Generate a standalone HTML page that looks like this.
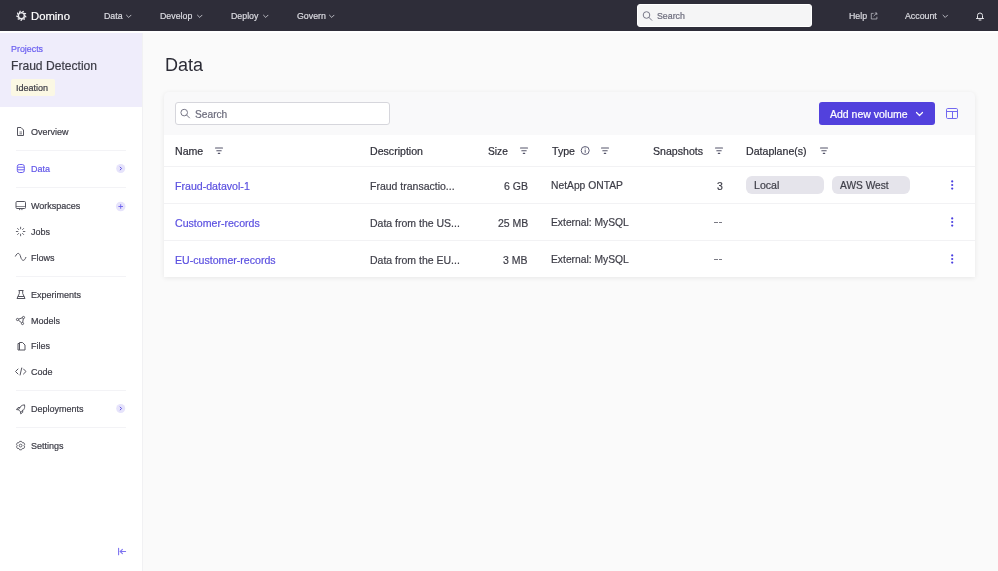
<!DOCTYPE html><html><head><meta charset="utf-8"><style>
*{box-sizing:border-box;margin:0;padding:0}
html,body{width:998px;height:571px;overflow:hidden;background:#fafafa;font-family:"Liberation Sans",sans-serif}
.t{position:absolute;line-height:1;white-space:nowrap;will-change:transform;-webkit-text-stroke:0.2px currentColor}
.b{position:absolute}
svg.ov{position:absolute;left:0;top:0}
</style></head><body><div class="b" style="left:0px;top:0px;width:998px;height:31px;background:#2e2d39"></div><div class="b" style="left:0px;top:31px;width:998px;height:2px;background:#ffffff"></div><div class="b" style="left:0px;top:33px;width:143px;height:538px;background:#fff;border-right:1px solid #f1f1f3"></div><div class="b" style="left:0px;top:33px;width:142px;height:74px;background:#efedfb"></div><div class="b" style="left:164px;top:92px;width:811px;height:185px;background:#f9f9fa;border-radius:5px 5px 0 0;box-shadow:0 1px 5px rgba(0,0,0,0.08)"></div><div class="b" style="left:164px;top:135px;width:811px;height:142px;background:#fff"></div><div class="b" style="left:164px;top:166px;width:811px;height:1px;background:#f2f2f4"></div><div class="b" style="left:164px;top:203px;width:811px;height:1px;background:#f2f2f4"></div><div class="b" style="left:164px;top:240px;width:811px;height:1px;background:#f2f2f4"></div><div class="b" style="left:175px;top:102px;width:215px;height:23px;background:#fff;border:1px solid #d6d6dc;border-radius:3px"></div><div class="b" style="left:637px;top:4px;width:175px;height:23px;background:#f5f5f6;border:1px solid #ffffff;border-radius:3px"></div><div class="b" style="left:819px;top:102px;width:116px;height:23px;background:#5241dd;border-radius:3px"></div><div class="b" style="left:746px;top:176px;width:78px;height:18px;background:#e5e4eb;border-radius:6px"></div><div class="b" style="left:832px;top:176px;width:78px;height:18px;background:#e5e4eb;border-radius:6px"></div><div class="b" style="left:11px;top:79px;width:44px;height:17px;background:#fbf8e4;border-radius:2px"></div><div class="b" style="left:16px;top:150px;width:110px;height:1px;background:#f3f3f6"></div><div class="b" style="left:16px;top:187px;width:110px;height:1px;background:#f3f3f6"></div><div class="b" style="left:16px;top:276px;width:110px;height:1px;background:#f3f3f6"></div><div class="b" style="left:16px;top:390px;width:110px;height:1px;background:#f3f3f6"></div><div class="b" style="left:16px;top:427px;width:110px;height:1px;background:#f3f3f6"></div><div class="b" style="left:714px;top:222.25px;width:3.8px;height:1.2px;background:#7a7a84"></div><div class="b" style="left:718.8px;top:222.25px;width:3.6px;height:1.2px;background:#7a7a84"></div><div class="b" style="left:714px;top:259.25px;width:3.8px;height:1.2px;background:#7a7a84"></div><div class="b" style="left:718.8px;top:259.25px;width:3.6px;height:1.2px;background:#7a7a84"></div><div class="t" style="left:31px;top:11px;font-size:11.3px;color:#ffffff;">Domino</div><div class="t" style="left:104px;top:12px;font-size:8.8px;color:#dcdce2;">Data</div><div class="t" style="left:160px;top:12px;font-size:8.8px;color:#dcdce2;">Develop</div><div class="t" style="left:231px;top:12px;font-size:8.8px;color:#dcdce2;">Deploy</div><div class="t" style="left:297px;top:12px;font-size:8.8px;color:#dcdce2;">Govern</div><div class="t" style="left:657px;top:12px;font-size:8.8px;color:#6c6c7c;">Search</div><div class="t" style="left:849px;top:12px;font-size:8.8px;color:#dcdce2;">Help</div><div class="t" style="left:905px;top:12px;font-size:8.8px;color:#dcdce2;">Account</div><div class="t" style="left:11px;top:45px;font-size:8.9px;color:#6b5ff0;">Projects</div><div class="t" style="left:11px;top:60px;font-size:12.1px;color:#3c3c46;">Fraud Detection</div><div class="t" style="left:16px;top:83.5px;font-size:9.0px;color:#3c3c46;">Ideation</div><div class="t" style="left:31px;top:128px;font-size:9.0px;color:#3c3c46;">Overview</div><div class="t" style="left:31px;top:164.5px;font-size:9.0px;color:#6257e8;">Data</div><div class="t" style="left:31px;top:202px;font-size:9.0px;color:#3c3c46;">Workspaces</div><div class="t" style="left:31px;top:228px;font-size:9.0px;color:#3c3c46;">Jobs</div><div class="t" style="left:31px;top:254px;font-size:9.0px;color:#3c3c46;">Flows</div><div class="t" style="left:31px;top:291px;font-size:9.0px;color:#3c3c46;">Experiments</div><div class="t" style="left:31px;top:316.5px;font-size:9.0px;color:#3c3c46;">Models</div><div class="t" style="left:31px;top:342px;font-size:9.0px;color:#3c3c46;">Files</div><div class="t" style="left:31px;top:368px;font-size:9.0px;color:#3c3c46;">Code</div><div class="t" style="left:31px;top:405px;font-size:9.0px;color:#3c3c46;">Deployments</div><div class="t" style="left:31px;top:442px;font-size:9.0px;color:#3c3c46;">Settings</div><div class="t" style="left:165px;top:56px;font-size:18px;color:#2c2c36;-webkit-text-stroke:0">Data</div><div class="t" style="left:195px;top:110px;font-size:10.2px;color:#6c6c7c;">Search</div><div class="t" style="left:830px;top:109px;font-size:10.5px;color:#ffffff;">Add new volume</div><div class="t" style="left:175px;top:146px;font-size:10.6px;color:#2e2e38;">Name</div><div class="t" style="left:370px;top:146px;font-size:10.6px;color:#2e2e38;">Description</div><div class="t" style="left:488px;top:146.6px;font-size:10.2px;color:#2e2e38;">Size</div><div class="t" style="left:552px;top:146px;font-size:10.6px;color:#2e2e38;">Type</div><div class="t" style="left:653px;top:146px;font-size:10.6px;color:#2e2e38;">Snapshots</div><div class="t" style="left:746px;top:146px;font-size:10.6px;color:#2e2e38;">Dataplane(s)</div><div class="t" style="left:175px;top:181px;font-size:10.6px;color:#5b50e0;">Fraud-datavol-1</div><div class="t" style="left:370px;top:181px;font-size:10.5px;color:#3e3e48;">Fraud transactio...</div><div class="t" style="right:470px;top:181px;font-size:10.5px;color:#3e3e48">6 GB</div><div class="t" style="left:551px;top:181px;font-size:10.3px;color:#3e3e48;">NetApp ONTAP</div><div class="t" style="right:275px;top:181px;font-size:10.5px;color:#3e3e48">3</div><div class="t" style="left:175px;top:218px;font-size:10.6px;color:#5b50e0;">Customer-records</div><div class="t" style="left:370px;top:218px;font-size:10.5px;color:#3e3e48;">Data from the US...</div><div class="t" style="right:470px;top:218px;font-size:10.5px;color:#3e3e48">25 MB</div><div class="t" style="left:551px;top:218px;font-size:10.3px;color:#3e3e48;">External: MySQL</div><div class="t" style="left:175px;top:255px;font-size:10.6px;color:#5b50e0;">EU-customer-records</div><div class="t" style="left:370px;top:255px;font-size:10.5px;color:#3e3e48;">Data from the EU...</div><div class="t" style="right:470px;top:255px;font-size:10.5px;color:#3e3e48">3 MB</div><div class="t" style="left:551px;top:255px;font-size:10.3px;color:#3e3e48;">External: MySQL</div><div class="t" style="left:754px;top:180px;font-size:10.6px;color:#3e3e48;">Local</div><div class="t" style="left:840px;top:181px;font-size:10.2px;color:#3e3e48;">AWS West</div><svg class="ov" width="998" height="571" viewBox="0 0 998 571"><g stroke="#55556a" stroke-width="1.1" stroke-linecap="round"><line x1="215.5" y1="148.0" x2="222.5" y2="148.0"/><line x1="216.8" y1="150.7" x2="221.2" y2="150.7"/><line x1="218.3" y1="153.4" x2="219.7" y2="153.4"/></g><g stroke="#55556a" stroke-width="1.1" stroke-linecap="round"><line x1="520.5" y1="148.0" x2="527.5" y2="148.0"/><line x1="521.8" y1="150.7" x2="526.2" y2="150.7"/><line x1="523.3" y1="153.4" x2="524.7" y2="153.4"/></g><g stroke="#55556a" stroke-width="1.1" stroke-linecap="round"><line x1="601.5" y1="148.0" x2="608.5" y2="148.0"/><line x1="602.8" y1="150.7" x2="607.2" y2="150.7"/><line x1="604.3" y1="153.4" x2="605.7" y2="153.4"/></g><g stroke="#55556a" stroke-width="1.1" stroke-linecap="round"><line x1="715.5" y1="148.0" x2="722.5" y2="148.0"/><line x1="716.8" y1="150.7" x2="721.2" y2="150.7"/><line x1="718.3" y1="153.4" x2="719.7" y2="153.4"/></g><g stroke="#55556a" stroke-width="1.1" stroke-linecap="round"><line x1="820.5" y1="148.0" x2="827.5" y2="148.0"/><line x1="821.8" y1="150.7" x2="826.2" y2="150.7"/><line x1="823.3" y1="153.4" x2="824.7" y2="153.4"/></g><circle cx="585.2" cy="150.5" r="4" fill="none" stroke="#5d5d75" stroke-width="1"/><line x1="585.2" y1="149.6" x2="585.2" y2="152.8" stroke="#5d5d75" stroke-width="1"/><circle cx="585.2" cy="148" r="0.6" fill="#5d5d75"/><circle cx="952.2" cy="181.4" r="1.1" fill="#4a3fe0"/><circle cx="952.2" cy="185.0" r="1.1" fill="#4a3fe0"/><circle cx="952.2" cy="188.6" r="1.1" fill="#4a3fe0"/><circle cx="952.2" cy="218.4" r="1.1" fill="#4a3fe0"/><circle cx="952.2" cy="222.0" r="1.1" fill="#4a3fe0"/><circle cx="952.2" cy="225.6" r="1.1" fill="#4a3fe0"/><circle cx="952.2" cy="255.4" r="1.1" fill="#4a3fe0"/><circle cx="952.2" cy="259.0" r="1.1" fill="#4a3fe0"/><circle cx="952.2" cy="262.6" r="1.1" fill="#4a3fe0"/><polyline points="916.5,112.5 919.5,115.5 922.5,112.5" fill="none" stroke="#fff" stroke-width="1.2" stroke-linecap="round" stroke-linejoin="round"/><rect x="946.5" y="108.5" width="11" height="10" rx="1.2" fill="none" stroke="#7268f0" stroke-width="1"/><line x1="946.5" y1="111.5" x2="957.5" y2="111.5" stroke="#7268f0" stroke-width="1"/><line x1="952.5" y1="111.5" x2="952.5" y2="118.5" stroke="#7268f0" stroke-width="1"/><circle cx="646.5" cy="15" r="3.3" fill="none" stroke="#777787" stroke-width="1"/><line x1="648.81" y1="17.31" x2="651.78" y2="20.28" stroke="#777787" stroke-width="1" stroke-linecap="round"/><circle cx="184.2" cy="112.6" r="3.3" fill="none" stroke="#777787" stroke-width="1"/><line x1="186.51" y1="114.91" x2="189.48" y2="117.88" stroke="#777787" stroke-width="1" stroke-linecap="round"/><polyline points="126.5,15.2 128.75,17.45 131.0,15.2" fill="none" stroke="#c8c8d0" stroke-width="0.9" stroke-linecap="round" stroke-linejoin="round"/><polyline points="197.5,15.2 199.75,17.45 202.0,15.2" fill="none" stroke="#c8c8d0" stroke-width="0.9" stroke-linecap="round" stroke-linejoin="round"/><polyline points="263.5,15.2 265.75,17.45 268.0,15.2" fill="none" stroke="#c8c8d0" stroke-width="0.9" stroke-linecap="round" stroke-linejoin="round"/><polyline points="329.5,15.2 331.75,17.45 334.0,15.2" fill="none" stroke="#c8c8d0" stroke-width="0.9" stroke-linecap="round" stroke-linejoin="round"/><polyline points="943,15.2 945.25,17.45 947.5,15.2" fill="none" stroke="#c8c8d0" stroke-width="0.9" stroke-linecap="round" stroke-linejoin="round"/><g fill="none" stroke="#c0c0c8" stroke-width="0.75"><path d="M873.6,13.4 h-2.3 v5.6 h5.6 v-2.3"/><path d="M873.6,16.2 l3.2,-3.2 M874.8,13 h2 v2"/></g><path d="M976.5,18.5 h7 M977.5,18.5 v-3 a2.5,2.5 0 0 1 5,0 v3 M979,20 h2" fill="none" stroke="#e4e4e8" stroke-width="1" stroke-linecap="round"/><circle cx="21.4" cy="15.7" r="2.9" fill="none" stroke="#ececf0" stroke-width="1.1"/><line x1="24.34" y1="15.10" x2="25.86" y2="16.84" stroke="#ececf0" stroke-width="1.3" stroke-linecap="round"/><line x1="24.04" y1="17.13" x2="24.08" y2="19.44" stroke="#ececf0" stroke-width="1.3" stroke-linecap="round"/><line x1="22.50" y1="18.49" x2="21.05" y2="20.29" stroke="#ececf0" stroke-width="1.3" stroke-linecap="round"/><line x1="20.45" y1="18.54" x2="18.19" y2="18.99" stroke="#ececf0" stroke-width="1.3" stroke-linecap="round"/><line x1="18.84" y1="17.27" x2="16.82" y2="16.15" stroke="#ececf0" stroke-width="1.3" stroke-linecap="round"/><line x1="18.43" y1="15.25" x2="17.60" y2="13.11" stroke="#ececf0" stroke-width="1.3" stroke-linecap="round"/><line x1="19.41" y1="13.45" x2="20.16" y2="11.27" stroke="#ececf0" stroke-width="1.3" stroke-linecap="round"/><line x1="21.32" y1="12.70" x2="23.29" y2="11.51" stroke="#ececf0" stroke-width="1.3" stroke-linecap="round"/><line x1="23.27" y1="13.35" x2="25.55" y2="13.71" stroke="#ececf0" stroke-width="1.3" stroke-linecap="round"/><g fill="none" stroke="#55555f" stroke-width="1"><path d="M17.5,127.5 h3.5 l2.5,2.5 v5.5 h-6 z"/><path d="M19.5,132 h2.5 M19.5,133.8 h2.5" stroke-width="0.8"/></g><g fill="none" stroke="#6a5fee" stroke-width="1"><rect x="17.3" y="164.5" width="7" height="8" rx="2"/><path d="M17.3,167.2 h7 M17.3,169.8 h7"/></g><circle cx="120.7" cy="168.5" r="4.5" fill="#e6e3fb"/><polyline points="119.9,166.8 121.6,168.5 119.9,170.2" transform="translate(0,0.0)" fill="none" stroke="#5b50e0" stroke-width="1"/><circle cx="120.7" cy="408.5" r="4.5" fill="#e6e3fb"/><polyline points="119.9,166.8 121.6,168.5 119.9,170.2" transform="translate(0,240.0)" fill="none" stroke="#5b50e0" stroke-width="1"/><circle cx="120.7" cy="206.5" r="4.8" fill="#e6e3fb"/><path d="M118.4,206.5 h4.6 M120.7,204.2 v4.6" stroke="#6a5fee" stroke-width="0.9"/><g fill="none" stroke="#55555f" stroke-width="1"><rect x="16" y="201.5" width="9.5" height="7" rx="1"/><path d="M16,206.5 h9.5" stroke-width="0.7"/><path d="M19,209.6 h1.2 M21.3,209.6 h1.2" stroke-width="0.9"/></g><line x1="23.30" y1="231.50" x2="24.90" y2="231.50" stroke="#55555f" stroke-width="0.9" stroke-linecap="round"/><line x1="22.51" y1="233.41" x2="23.64" y2="234.54" stroke="#55555f" stroke-width="0.9" stroke-linecap="round"/><line x1="20.60" y1="234.20" x2="20.60" y2="235.80" stroke="#55555f" stroke-width="0.9" stroke-linecap="round"/><line x1="18.69" y1="233.41" x2="17.56" y2="234.54" stroke="#55555f" stroke-width="0.9" stroke-linecap="round"/><line x1="17.90" y1="231.50" x2="16.30" y2="231.50" stroke="#55555f" stroke-width="0.9" stroke-linecap="round"/><line x1="18.69" y1="229.59" x2="17.56" y2="228.46" stroke="#55555f" stroke-width="0.9" stroke-linecap="round"/><line x1="20.60" y1="228.80" x2="20.60" y2="227.20" stroke="#55555f" stroke-width="0.9" stroke-linecap="round"/><line x1="22.51" y1="229.59" x2="23.64" y2="228.46" stroke="#55555f" stroke-width="0.9" stroke-linecap="round"/><path d="M15.3,256.5 C17.5,252 19.5,252.5 20.7,257 C22,261.5 24.5,261.5 26,257" fill="none" stroke="#55555f" stroke-width="1"/><g fill="none" stroke="#55555f" stroke-width="1"><path d="M18.5,290.5 h5 M19.3,290.5 v3 l-2.3,5 h8 l-2.3,-5 v-3"/><path d="M17.8,296.5 h6.5"/></g><g fill="none" stroke="#55555f" stroke-width="1"><circle cx="17.5" cy="319.5" r="1.1"/><circle cx="23.5" cy="317.5" r="1.1"/><circle cx="22.5" cy="323.5" r="1.1"/><path d="M18.5,319.2 l4,-1.5 M18.4,320.2 l3.2,2.6 M23.3,318.6 l-0.6,3.8"/></g><g fill="none" stroke="#55555f" stroke-width="1"><path d="M19.5,342.5 h3 l2.5,2.5 v5 h-5.5 z"/><path d="M19.5,343.5 h-1.5 v6.5 h1.5"/></g><g fill="none" stroke="#55555f" stroke-width="1" stroke-linecap="round"><path d="M18,369 l-2.5,2.5 l2.5,2.5 M23.5,369 l2.5,2.5 l-2.5,2.5 M21.7,368 l-1.6,7"/></g><g fill="none" stroke="#55555f" stroke-width="1" stroke-linejoin="round"><path d="M24.5,404.8 c-3,0.2 -5,2.2 -6,5 l2,2 c2.8,-1 4.8,-3 4,-7 z"/><path d="M18.5,409.8 l-2,-0.2 l1.5,-2 l2.5,0 M20.5,411.8 l0.2,2 l2,-1.5 l0,-2.5"/></g><g fill="none" stroke="#55555f" stroke-width="0.9" stroke-linejoin="round"><polygon points="18.97,442.62 19.66,441.40 21.54,441.40 22.23,442.62 22.37,442.70 23.76,442.69 24.70,444.31 24.00,445.52 24.00,445.68 24.70,446.89 23.76,448.51 22.37,448.50 22.23,448.58 21.54,449.80 19.66,449.80 18.97,448.58 18.83,448.50 17.44,448.51 16.50,446.89 17.20,445.68 17.20,445.52 16.50,444.31 17.44,442.69 18.83,442.70"/><circle cx="20.6" cy="445.6" r="1.4"/></g><g fill="none" stroke="#7d73f0" stroke-width="1.1" stroke-linecap="round"><path d="M118.6,548.3 v6.4 M125.6,551.5 h-5.2 M122.4,549.3 l-2.2,2.2 l2.2,2.2"/></g></svg></body></html>
